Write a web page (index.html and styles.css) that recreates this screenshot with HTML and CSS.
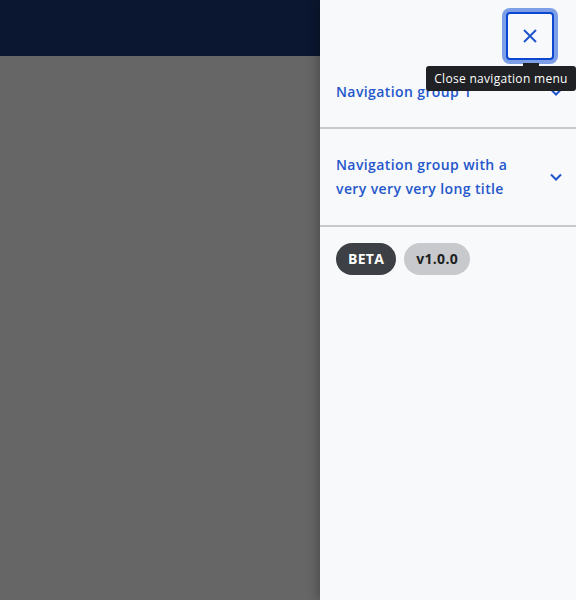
FILE: index.html
```html
<!DOCTYPE html>
<html lang="en">
<head>
<meta charset="utf-8">
<title>Navigation</title>
<link rel="stylesheet" href="styles.css">
</head>
<body>
<header class="topbar"></header>
<div class="overlay"></div>
<aside class="panel">
  <div class="panel-head">
    <button class="close-btn" aria-label="Close navigation menu">
      <svg width="16" height="16" viewBox="0 0 16 16" aria-hidden="true"><path d="M2 2L14 14M14 2L2 14" stroke="#1f55c9" stroke-width="2" fill="none"/></svg>
    </button>
    <div class="tooltip">Close navigation menu</div>
  </div>
  <nav class="groups">
    <div class="group group-first">
      <span class="group-title">Navigation group 1</span>
      <svg class="chev" width="12" height="8" viewBox="0 0 12 8"><path d="M1 1.5L6 6.5L11 1.5" stroke="#1f55c9" stroke-width="2" fill="none"/></svg>
    </div>
    <div class="group">
      <span class="group-title">Navigation group with a very very very long title</span>
      <svg class="chev" width="12" height="8" viewBox="0 0 12 8"><path d="M1 1.5L6 6.5L11 1.5" stroke="#1f55c9" stroke-width="2" fill="none"/></svg>
    </div>
  </nav>
  <div class="badges">
    <span class="badge badge-dark">BETA</span>
    <span class="badge badge-light">v1.0.0</span>
  </div>
</aside>
</body>
</html>
```
FILE: styles.css
```css
html, body {
  margin: 0;
  padding: 0;
  width: 576px;
  height: 600px;
  overflow: hidden;
  font-family: "Open Sans", "Noto Sans", sans-serif;
}
.topbar {
  height: 56px;
  background: #0b1730;
}
.overlay {
  height: 544px;
  background: #666666;
}
.panel {
  position: absolute;
  top: 0;
  right: 0;
  width: 256px;
  height: 600px;
  background: #f8f9fa;
  box-shadow: -3px 0 10px rgba(0, 0, 0, 0.25);
  display: flex;
  flex-direction: column;
}
.panel-head {
  position: relative;
  height: 60px;
  box-sizing: border-box;
  padding: 12px 22px 0 0;
  display: flex;
  justify-content: flex-end;
}
.close-btn {
  width: 48px;
  height: 48px;
  box-sizing: border-box;
  border: 2px solid #0b47d1;
  border-radius: 4px;
  background: #f8f9fa;
  box-shadow: 0 0 0 4px #7c9fe8;
  display: flex;
  align-items: center;
  justify-content: center;
  padding: 0;
}
.tooltip {
  position: absolute;
  top: 66px;
  right: 0;
  width: 150px;
  height: 25px;
  background: #1f2124;
  color: #ffffff;
  font-size: 12px;
  line-height: 25px;
  letter-spacing: 0.3px;
  text-align: center;
  border-radius: 3px;
  z-index: 2;
}
.tooltip::before {
  content: "";
  position: absolute;
  top: -3px;
  right: 37px;
  width: 16px;
  height: 3px;
  background: #1f2124;
}
.groups {
  display: flex;
  flex-direction: column;
}
.group {
  display: flex;
  align-items: center;
  justify-content: space-between;
  gap: 16px;
  padding: 24px 14px 24px 16px;
  border-bottom: 2px solid #c9c9c9;
}
.group-first {
  padding-top: 20px;
  padding-bottom: 23px;
}
.group-title {
  color: #2457cc;
  font-size: 14px;
  font-weight: 600;
  line-height: 24px;
  letter-spacing: 0.4px;
}
.chev {
  flex: none;
}
.badges {
  display: flex;
  gap: 8px;
  padding: 16px 16px;
}
.badge {
  height: 32px;
  line-height: 32px;
  padding: 0 12px;
  border-radius: 16px;
  font-size: 14px;
  font-weight: 700;
  letter-spacing: 0.3px;
}
.badge-dark {
  background: #3d4044;
  color: #ffffff;
}
.badge-light {
  background: #c8c9cc;
  color: #1d1f22;
}
```
